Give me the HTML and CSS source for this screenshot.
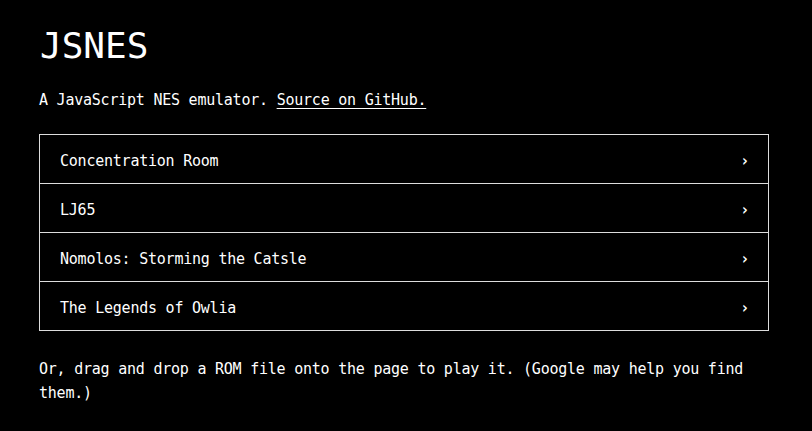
FILE: index.html
```html
<!DOCTYPE html>
<html lang="en">
<head>
<meta charset="utf-8">
<title>JSNES</title>
<link rel="stylesheet" href="styles.css">
</head>
<body>
<main class="page">
  <h1 class="title">JSNES</h1>
  <p class="intro">A JavaScript NES emulator. <a class="link" href="#">Source on GitHub.</a></p>
  <ul class="roms">
    <li class="rom"><span>Concentration Room</span><span class="chev">›</span></li>
    <li class="rom"><span>LJ65</span><span class="chev">›</span></li>
    <li class="rom"><span>Nomolos: Storming the Catsle</span><span class="chev">›</span></li>
    <li class="rom"><span>The Legends of Owlia</span><span class="chev">›</span></li>
  </ul>
  <p class="note">Or, drag and drop a ROM file onto the page to play it. (Google may help you find them.)</p>
</main>
</body>
</html>
```
FILE: styles.css
```css
html, body {
  margin: 0;
  background: #000;
  color: #fff;
}
body {
  font-family: "DejaVu Sans Mono", "Liberation Mono", monospace;
  font-size: 15px;
  letter-spacing: -0.23px;
  line-height: 24px;
}
.page {
  width: 730px;
  padding: 22px 0 0 39px;
}
.title {
  margin: 0;
  font-size: 36px;
  font-weight: normal;
  line-height: 48px;
  letter-spacing: 0;
  padding-left: 1px;
}
.intro {
  margin: 18px 0 0;
}
.link {
  color: #fff;
  text-decoration: underline;
  text-underline-offset: 3px;
}
.roms {
  list-style: none;
  margin: 22px 0 0;
  padding: 0;
  border: 1px solid #ddd;
}
.rom {
  box-sizing: border-box;
  display: flex;
  justify-content: space-between;
  align-items: center;
  height: 49px;
  padding: 4px 20px 0;
  border-top: 1px solid #ddd;
}
.rom:first-child {
  height: 48px;
  border-top: 0;
}
.chev {
  font-weight: bold;
  margin-right: -1px;
}
.note {
  margin: 26px 0 0;
}
```
